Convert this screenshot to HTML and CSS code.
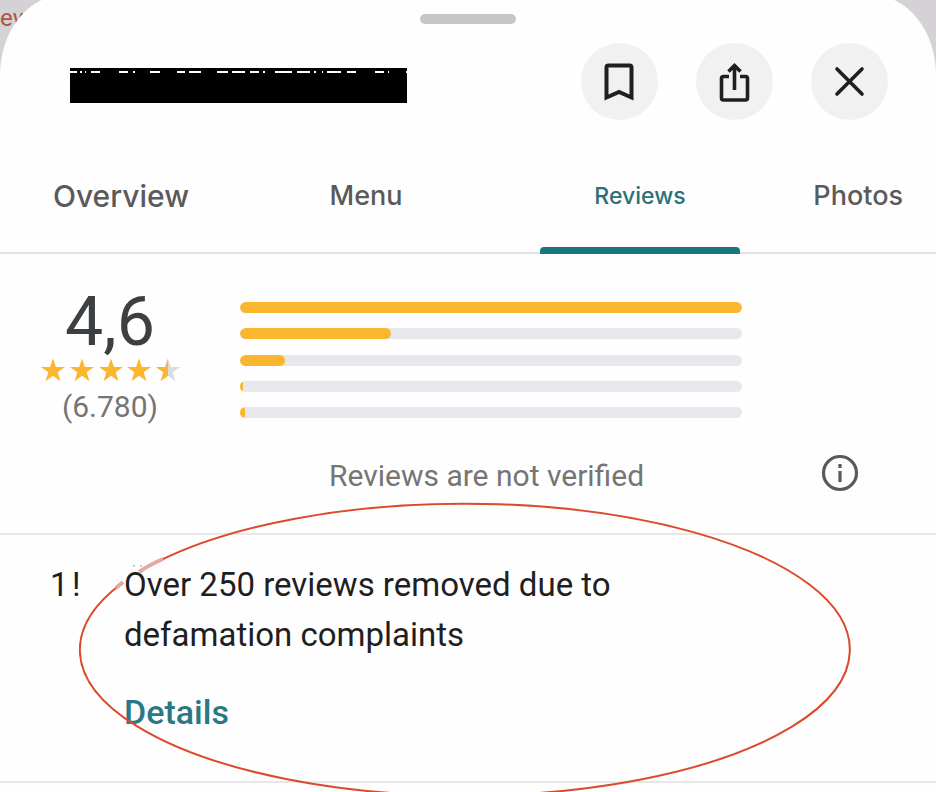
FILE: index.html
```html
<!DOCTYPE html>
<html lang="en">
<head>
    <meta charset="UTF-8">
    <meta name="viewport" content="width=device-width, initial-scale=1.0">
    <title>Reviews</title>
    <link rel="stylesheet" href="styles.css">
</head>
<body>
    <div class="behind">ew</div>

    <main class="sheet">
        <div class="handle"></div>

        <header class="header">
            <!-- place name, blacked out -->
            <svg class="redacted" width="337" height="35" viewBox="0 0 337 35">
                <rect width="337" height="35" fill="#000"/>
                <path d="M0 4h7M10 4h2M15 4h1M21 4h9M49 4h9M63 4h2M80 4h10M107 4h8M119 4h12M147 4h11M162 4h13M180 4h9M193 4h2M205 4h17M227 4h13M244 4h2M252 4h1M257 4h14M277 4h9M305 4h9M318 4h1M336 4h1" stroke="#fff" stroke-width="2"/>
            </svg>
            <div class="actions">
                <button class="round-button" aria-label="Save">
                    <svg width="40" height="40" viewBox="0 0 40 40" fill="none" stroke="#1f1f1f" stroke-width="4">
                        <path d="M6.500 35.500V5.500Q6.500 3.500 8.500 3.500H29.500Q31.500 3.500 31.500 5.500V35.500L19 30Z"/>
                    </svg>
                </button>
                <button class="round-button" aria-label="Share">
                    <svg width="40" height="40" viewBox="0 0 40 40" fill="none" stroke="#1f1f1f" stroke-width="3.600">
                        <path d="M14 14.500H8.500Q6.500 14.500 6.500 16.500V36Q6.500 38 8.500 38H30.500Q32.500 38 32.500 36V16.500Q32.500 14.500 30.500 14.500H25"/>
                        <path d="M19.500 28V4M13.500 9.500L19.500 3.500L25.500 9.500"/>
                    </svg>
                </button>
                <button class="round-button" aria-label="Close">
                    <svg width="40" height="40" viewBox="0 0 40 40" fill="none" stroke="#1f1f1f" stroke-width="3.600" stroke-linecap="round">
                        <path d="M7 7L32 32M32 7L7 32"/>
                    </svg>
                </button>
            </div>
        </header>

        <nav class="tabs">
            <a class="tab tab-first" href="#">Overview</a>
            <a class="tab" href="#">Menu</a>
            <a class="tab active" href="#">Reviews</a>
            <a class="tab tab-last" href="#">Photos</a>
        </nav>

        <section class="summary">
            <div class="rating">
                <div class="score">
                    <div class="score-value">4,6</div>
                    <svg class="stars" width="140" height="26" viewBox="0 0 140 26">
                        <defs>
                            <path id="star" d="M12 0.500L14.900 9H24L16.700 14.300L19.400 23.200L12 17.800L4.600 23.200L7.300 14.300L0 9H9.100Z"/>
                            <clipPath id="half"><rect width="12" height="26"/></clipPath>
                        </defs>
                        <g fill="#fbb62f">
                            <use href="#star" x="1" y="0"/>
                            <use href="#star" x="30" y="0"/>
                            <use href="#star" x="59" y="0"/>
                            <use href="#star" x="87" y="0"/>
                        </g>
                        <g transform="translate(116 0)">
                            <use href="#star" fill="#dadce3"/>
                            <use href="#star" fill="#fbb62f" clip-path="url(#half)"/>
                        </g>
                    </svg>
                    <div class="score-count">(6.780)</div>
                </div>
                <div class="bars">
                    <div class="bar"><div class="bar-fill" style="width: 100%"></div></div>
                    <div class="bar"><div class="bar-fill" style="width: 30%"></div></div>
                    <div class="bar"><div class="bar-fill" style="width: 9%"></div></div>
                    <div class="bar"><div class="bar-fill" style="width: 0.5%"></div></div>
                    <div class="bar"><div class="bar-fill" style="width: 1%"></div></div>
                </div>
            </div>
            <div class="verified">
                <p>Reviews are not verified</p>
                <button class="info-button" aria-label="More information">
                    <svg width="38" height="38" viewBox="0 0 38 38" fill="none" stroke="#5a5a5a" stroke-width="3.200">
                        <circle cx="19" cy="19" r="16.500"/>
                        <path d="M19 17V28M19 10V14"/>
                    </svg>
                </button>
            </div>
        </section>

        <section class="notice">
            <div class="notice-mark">1&#8202;!</div>
            <div class="notice-body">
                <p>Over 250 reviews removed due to<br>defamation complaints</p>
                <a class="details" href="#">Details</a>
            </div>
            <!-- ellipse left open and faded at the first letter -->
            <svg class="circle-mark" viewBox="0 0 772 296" preserveAspectRatio="none">
                <path d="M78 60A385 146 0 1 1 42 82"/>
                <path class="faded" d="M60 70Q70 63 84 57M37 86L44 80"/>
                <circle class="speck" cx="55" cy="64" r="1"/>
                <circle class="speck" cx="62" cy="64" r="1"/>
            </svg>
        </section>
    </main>
</body>
</html>
```
FILE: styles.css
```css
* {
    margin: 0;
    padding: 0;
    box-sizing: border-box;
}

body {
    min-height: 100vh;
    background: #d5d2d5;
    color: #1f1f1f;
    font-family: Roboto, 'Liberation Sans', sans-serif;
    overflow: hidden;
}

button {
    border: none;
    background: none;
    cursor: pointer;
}

a {
    text-decoration: none;
}

svg {
    display: block;
}

/* page that shows at the corners of the sheet */
.behind {
    position: absolute;
    top: 0;
    left: 0;
    color: #b0523f;
    font-size: 24px;
    line-height: 36px;
}

.sheet {
    position: relative;
    min-height: calc(100vh + 5px);
    margin-top: -5px;
    padding-top: 19px;
    background: #fefefe;
    border-radius: 64px 64px 0 0 / 80px 80px 0 0;
}

.handle {
    width: 96px;
    height: 10px;
    margin: 0 auto;
    border-radius: 5px;
    background: #c6c6c6;
}

.header {
    display: flex;
    align-items: center;
    justify-content: space-between;
    padding: 19px 48px 0 70px;
}

.redacted {
    margin-top: 8px;
}

.actions {
    display: flex;
    gap: 38px;
}

.round-button {
    display: flex;
    align-items: center;
    justify-content: center;
    width: 77px;
    height: 77px;
    border-radius: 50%;
    background: #f1f1f1;
}

.tabs {
    display: grid;
    grid-template-columns: 142px 1fr 200px 196px;
    margin-top: 20px;
    padding-left: 50px;
    border-bottom: 2px solid #e3e3e3;
}

.tab {
    height: 112px;
    color: #5a5a5a;
    font-family: Inter, sans-serif;
    font-size: 27px;
    font-weight: 500;
    line-height: 112px;
    text-align: center;
}

.tab-first {
    font-size: 30px;
}

.tab-last {
    padding-right: 33px;
    text-align: right;
}

.tab.active {
    position: relative;
    color: #2b7078;
    font-size: 23px;
}

.tab.active::after {
    content: '';
    position: absolute;
    right: 0;
    bottom: -2px;
    left: 0;
    height: 7px;
    border-radius: 4px 4px 0 0;
    background: #1a7582;
}

.summary {
    padding: 32px 0 36px;
    border-bottom: 2px solid #e8e8e8;
}

.rating {
    display: flex;
    gap: 20px;
    padding: 0 194px 0 0;
}

.score {
    display: flex;
    flex-direction: column;
    align-items: center;
    width: 220px;
}

.score-value {
    color: #3c4043;
    font-size: 68px;
    line-height: 72px;
}

.score-count {
    color: #757575;
    font-size: 30px;
    line-height: 46px;
}

.bars {
    display: flex;
    flex: 1;
    flex-direction: column;
    justify-content: space-between;
    height: 116px;
    margin-top: 16px;
}

.bar {
    height: 11px;
    border-radius: 6px;
    background: #e8e8ec;
    overflow: hidden;
}

.bar-fill {
    height: 100%;
    border-radius: 6px;
    background: #fbb62f;
}

.verified {
    display: flex;
    align-items: flex-start;
    justify-content: space-between;
    padding: 24px 77px 0 329px;
    color: #757575;
    font-size: 30px;
    line-height: 42px;
}

.verified p {
    padding-top: 1px;
}

.notice {
    position: relative;
    display: flex;
    height: 248px;
    padding: 25px 50px 0;
    border-bottom: 2px solid #e8e8e8;
    font-size: 33px;
    line-height: 50px;
}

.notice-mark {
    width: 74px;
}

.details {
    display: inline-block;
    margin-top: 27px;
    color: #2b7885;
    font-size: 34px;
    font-weight: 500;
}

/* red ellipse drawn round the notice */
.circle-mark {
    position: absolute;
    top: -33px;
    left: 79px;
    width: calc(100% - 164px);
    height: 296px;
    fill: none;
    stroke: #dc4a2c;
    stroke-width: 2;
    pointer-events: none;
}

.circle-mark .faded {
    stroke: #e3a9a2;
    stroke-width: 4;
}

.circle-mark .speck {
    fill: #b5b5b5;
    stroke: none;
}
```
